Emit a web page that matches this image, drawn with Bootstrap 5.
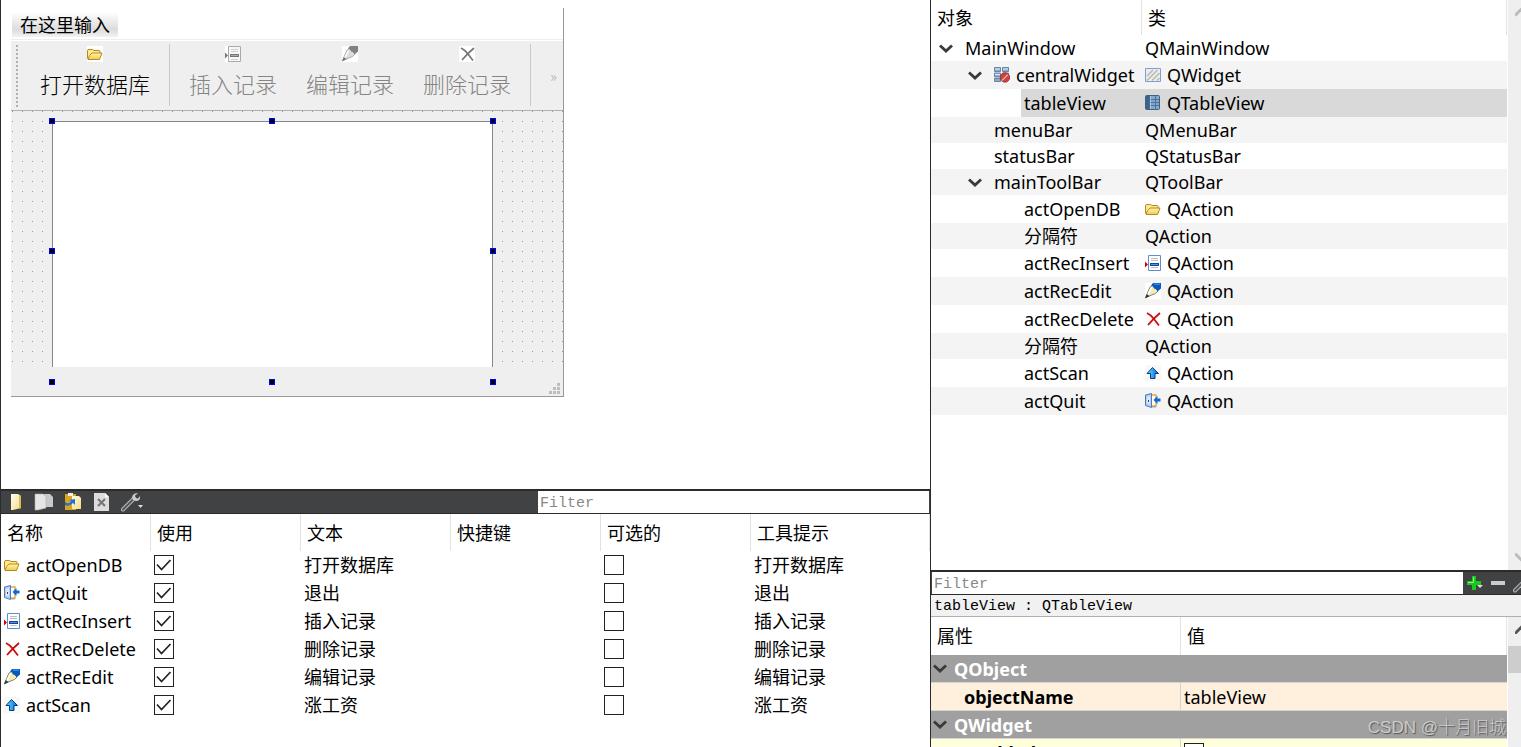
<!DOCTYPE html>
<html lang="zh-CN">
<head>
<meta charset="utf-8">
<meta name="viewport" content="width=device-width, initial-scale=1">
<title>Qt Designer</title>
<link href="https://cdn.jsdelivr.net/npm/bootstrap@5.3.0/dist/css/bootstrap.min.css" rel="stylesheet">
<style>
body{font-family:"Noto Sans","Noto Sans CJK SC",sans-serif;font-size:18px;line-height:24px;color:#000;background:#fff}
.designer{display:grid;grid-template-columns:930fr 591fr;height:100vh;overflow:hidden}
.left-pane{display:grid;grid-template-rows:489fr 258fr;border-left:1px solid #2b2b2d;min-width:0;min-height:0}
.right-pane{display:grid;grid-template-rows:570fr 177fr;border-left:1px solid #2b2b2d;min-width:0;min-height:0}
.left-pane>*,.right-pane>*{min-width:0;min-height:0;overflow:hidden}
svg{display:block;flex:none}
.ic{width:16px;height:16px}
.grid-tbl .ic{margin-right:6px}

/* form being edited */
.form-stage{padding:8px 0 0 10px}
.form-win{width:553px;border-right:1px solid #999;border-bottom:1px solid #999}
.menu-strip{height:32px;padding:4px 0 0 1px}
.menu-strip button{border:0;padding:0 8px;height:25px;line-height:24px;background:linear-gradient(#fff,#dcdcdc 70%,#f2f2f2)}
.tool-strip{height:71px;background:#efefef;border-top:1px solid #fff;border-bottom:1px solid #b0b0b0;padding:0 6px 0 5px;box-shadow:0 -1px #eee}
.grip{width:2px;height:63px;background:repeating-linear-gradient(#b0b0b0 0 2px,transparent 2px 4px)}
.tool-strip button{border:0;background:none;padding:5px 14px;font-family:"Noto Sans CJK SC",sans-serif;font-weight:300;font-size:22px;line-height:28px;color:#000}
.tool-strip button+button{margin-left:1px}
.tool-strip button svg{margin:0 auto 7px}
.tool-strip button:disabled{color:#858585}
.tool-strip .more{padding:0;font-size:15px;color:#aaa}
.vsep{width:1px;height:62px;background:#c8c8c8;margin:3px 5px 0}
.dots{height:256px;background:conic-gradient(from 270deg at 1px 1px,#999 90deg,transparent 0) 1px 0/10px 10px,#efefef;padding:10px 70px 0 41px}
.view-box{height:100%;background:#fff;border:1px solid #85858f;border-bottom:0}
.state-strip{height:29px;background:#efefef;padding:0 3px 2px}
.knob{position:absolute;width:6px;height:6px;background:#000;border:1px solid #00f;transform:translate(-50%,-50%)}

/* dark bars */
.dark-bar{height:25px;background:#404244;border-top:2px solid #2b2b2d;border-bottom:1px solid #2b2b2d}
.mono{font-family:"Liberation Mono",monospace;font-size:15px}
.find{border:0;border-radius:0;padding:2px 2px 0;height:22px;line-height:20px;background:#fff;min-width:0}
.find::placeholder{color:#888;opacity:1}
.dark-bar button{border:0;background:none;padding:0}
.act-tools{width:57.8%;gap:9px;padding-left:8px}
.act-find{margin-right:1px}
.prop-find{margin-left:1px}
.prop-tools{width:58px}

/* tables */
.grid-tbl{width:100%;table-layout:fixed;border-collapse:separate;border-spacing:0}
.grid-tbl th,.grid-tbl td{padding:0;white-space:nowrap;overflow:hidden;vertical-align:middle}
.grid-tbl thead th{font-weight:400;padding-left:6px;border-right:1px solid #e2e2e2}
.grid-tbl .c150{width:150px}
.grid-tbl .c211{width:211px}
.grid-tbl .c250{width:250px}
.acts thead th{height:37px}
.acts tbody td{height:28px;padding-left:3px}
.tick{width:20px;height:20px;margin:0;border:1px solid #222;border-radius:0!important;background-color:#fff;display:block}
.tick:checked{background-color:#fff;border-color:#222;background-size:20px 20px;background-image:url("data:image/svg+xml,%3Csvg xmlns='http://www.w3.org/2000/svg' viewBox='0 0 20 20'%3E%3Cpath d='M3 9.5l4.5 5L16.500 5' fill='none' stroke='%23222' stroke-width='1.700'/%3E%3C/svg%3E")!important}
.tree thead th{height:35px}
.tree tbody tr{height:26px}
.tree tbody tr.tall{height:28px}
.tree tbody tr:nth-child(even){background:#f4f4f4}
.tree td>div{height:26px}
.tree .tall td>div{height:28px}
.tree .lv1{padding-left:8px}
.tree .lv2{padding-left:37px}
.tree .lv2x{padding-left:63px}
.tree .lv3{padding-left:93px}
.tree .cls{padding-left:3px}
.picked{background:#d9d9d9;padding-left:3px}
.lead-gap{padding-left:90px}
.twist{width:14px;height:9px;margin-right:12px}
.rail{width:14px;border-left:1px solid #fff;background:#efefef;flex:none;overflow:hidden}
.thumb{height:27px;background:#cdcdcd}
.class-line{height:22px;line-height:24px;background:#f1f1f1;border-bottom:1px solid #b0b0b0;padding-left:3px}
.props thead th{height:38px}
.props tbody td,.props tbody th{height:28px;border-bottom:1px solid #d4d4d4}
.props .grp th{background:#a0a0a0;color:#fff;font-weight:700}
.props .grp .twist{margin:0 7px 0 2px}
.props .nm{font-weight:700;padding-left:33px;border-right:1px solid #d4d4d4}
.props .vl{padding-left:3px}
.c-peach>*{background:#fff0de}
.c-lemon>*{background:#ffffdc}
.stamp{position:absolute;right:15px;bottom:7px;color:#ccc;font-family:"Liberation Sans","Noto Sans CJK SC",sans-serif;font-weight:300;font-size:17px;text-shadow:1px 1px 1px #555}
</style>
</head>
<body>
<svg width="0" height="0" class="position-absolute" aria-hidden="true">
<defs>
<linearGradient id="gy" x2="0" y2="1"><stop stop-color="#fff6b0"/><stop offset="1" stop-color="#f3cb4c"/></linearGradient>
<linearGradient id="gb" x2="1" y2="0"><stop stop-color="#5fe0ff"/><stop offset="1" stop-color="#0a64e0"/></linearGradient>
<linearGradient id="gt" x2="1" y2="1"><stop stop-color="#8fb4d4"/><stop offset="1" stop-color="#30587f"/></linearGradient>
<linearGradient id="gp" x2="1" y2="1"><stop stop-color="#fffdf0"/><stop offset="1" stop-color="#f3dd82"/></linearGradient>
</defs>
<symbol id="folder" viewBox="0 0 16 16"><path d="M.5 12.500V4.500Q.5 3.500 2 3.500h3.500l1.500 1h5q1 0 1 1V7" fill="#ffe98e" stroke="#b88720"/><path d="M1 13.500h11.500l2.500-6.500H5L2.500 9.500z" fill="url(#gy)" stroke="#b88720" stroke-linejoin="round"/></symbol>
<symbol id="quit" viewBox="0 0 16 16"><path d="M6 2h5v11H6z" fill="#fff" stroke="#e0a84c" stroke-width="1.500"/><path d="M.5 2L6.500.500v14L.5 12.500z" fill="#b7cdf2" stroke="#4f78bd"/><path d="M2 4l3-1v8l-3-.5z" fill="#dbe7fb"/><path d="M3.500 7v2" stroke="#345"/><path d="M7 13h4v1.500H7z" fill="#aaa"/><path d="M15.500 5.500h-3V3L8.500 7l4 4V8.500h3z" fill="#096bd6"/></symbol>
<symbol id="insert" viewBox="0 0 16 16"><path d="M3.500.5h12v15h-12z" fill="#fff" stroke="#5b8fd0"/><path d="M6 3.500h7M6 5.500h7M6 12.500h7" stroke="#b9c0ca"/><path d="M5 8h9v3H5z" fill="#12489b"/><path d="M6 9.500h7" stroke="#5c8fd8"/><path d="M0 6.500l3 3-3 3z" fill="#d40000"/></symbol>
<symbol id="insertoff" viewBox="0 0 16 16"><path d="M0 0h16v16H0z" fill="#fff"/><path d="M3.500.5h12v15h-12z" fill="#f7f7f7" stroke="#aaa"/><path d="M6 3.500h7M6 5.500h7M6 13.500h7" stroke="#d0d0d0"/><path d="M5 8h9v3H5z" fill="#777"/><path d="M6 9.500h7" stroke="#aaa"/><path d="M0 6.500l3 3-3 3z" fill="#777"/></symbol>
<symbol id="del" viewBox="0 0 16 16"><path d="M2 2Q6 4 9 8t5 6.500M15 2Q9 7 3 14" fill="none" stroke="#cc0d0d" stroke-width="1.800"/></symbol>
<symbol id="deloff" viewBox="0 0 16 16"><path d="M0 0h16v16H0z" fill="#fff"/><path d="M2 2Q6 4 9 8t5 6.500M15 2Q9 7 3 14" fill="none" stroke="#777" stroke-width="1.700"/></symbol>
<symbol id="edit" viewBox="0 0 16 16"><path d="M0 0h16v16H0z" fill="#fff"/><path d="M.5 14.500L5 4l2.500-1.500L13 8l-2.500 2.500z" fill="#f3ecb0" stroke="#666" stroke-width=".8"/><path d="M6 2.500L8 0h8v5.500L12.500 8.500Q11.500 5.500 9 5.500 8.500 3 6 2.500z" fill="#0b55c0"/><path d="M9 1.200h6" stroke="#279bf0" stroke-width="1.300"/><path d="M0 15.500l1.800-4.500 2.700 2.200z" fill="#333"/><path d="M6.500 4.500L3 11.500" stroke="#fff" stroke-width="1.500"/></symbol>
<symbol id="editoff" viewBox="0 0 16 16"><path d="M0 0h16v16H0z" fill="#fff"/><path d="M.5 14.500L5 4l2.500-1.500L13 8l-2.500 2.500z" fill="#ddd" stroke="#999" stroke-width=".8"/><path d="M6 2.500L8 0h8v5.500L12.500 8.500Q11.500 5.500 9 5.500 8.500 3 6 2.500z" fill="#828282"/><path d="M0 15.500l1.800-4.500 2.700 2.200z" fill="#777"/><path d="M6.500 4.500L3 11.500" stroke="#fff" stroke-width="1.500"/></symbol>
<symbol id="scan" viewBox="0 0 16 16"><path d="M0 0h16v16H0z" fill="#f8f8f8"/><path d="M7.500 2.500L13.500 8.500h-3.500v5H5.500v-5H2z" fill="url(#gb)" stroke="#073b80"/></symbol>
<symbol id="layout" viewBox="0 0 16 16"><path d="M.5.5h6v4h-6zM8.500.5h6v4h-6zM.5 6h6v4h-6zM8.500 6h6v4h-6zM.5 11.500h6v3h-6z" fill="#86acd0" stroke="#53718f" stroke-width=".8"/><path d="M1 2h5M9 2h5M1 7.500h5" stroke="#e3effa"/><circle cx="11" cy="10.500" r="4.700" fill="#c94444" stroke="#a52222" stroke-width=".8"/><path d="M8 13.500l6-6" stroke="#eaa9a9" stroke-width="1.200"/></symbol>
<symbol id="widget" viewBox="0 0 16 16"><path d="M.5 1.500h15v13H.5z" fill="#ececea" stroke="#7ba0d8"/><path d="M2 9l6-6M2 13.500L12.500 3M7 13.500L14.500 6M12 13.500l2.500-2.500" stroke="#b9b9b5" stroke-width="1.600"/></symbol>
<symbol id="tbl" viewBox="0 0 16 16"><rect x=".5" y=".5" width="14" height="14" rx="1" fill="#7fa9cd" stroke="#42617f"/><path d="M1 1h3.500v13H1z" fill="#3d6286"/><path d="M4.500 1v13M10.500 1v13M1 4.500h13M1 7.500h13M1 10.500h13" stroke="#42678c" stroke-width=".8"/><path d="M5.500 1v13" stroke="#b9d8ef" stroke-width=".7"/></symbol>
<symbol id="twist" viewBox="0 0 14 9"><path d="M1 1.500l6 5.500 6-5.500" fill="none" stroke="#3a3a3a" stroke-width="2.800"/></symbol>
<symbol id="wrench" viewBox="0 0 20 20"><path d="M2 17.500L13 6.500" stroke="#bbb" stroke-width="4" stroke-linecap="round"/><path d="M2 17.500L13 6.500" stroke="#555" stroke-width="2" stroke-linecap="round"/><path d="M17 1.500l-3 2 .5 2.500 2.500.5 2-2.500q.5 4-2.500 4.800-3 .7-4.800-1.200-1.500-3 .8-5Q14.500.8 17 1.500z" fill="#ccc"/></symbol>
</svg>

<main class="designer position-relative">
<div class="left-pane">
  <section class="form-stage" aria-label="窗体">
    <div class="form-win position-relative">
      <div class="menu-strip"><button type="button">在这里输入</button></div>
      <div class="tool-strip d-flex align-items-start">
        <span class="grip mt-1"></span>
        <button type="button" class="ms-2"><svg class="ic bg-white"><use href="#folder"/></svg>打开数据库</button>
        <span class="vsep"></span>
        <button type="button" disabled><svg class="ic"><use href="#insertoff"/></svg>插入记录</button>
        <button type="button" disabled><svg class="ic"><use href="#editoff"/></svg>编辑记录</button>
        <button type="button" disabled><svg class="ic"><use href="#deloff"/></svg>删除记录</button>
        <span class="vsep"></span>
        <button type="button" class="more ms-auto align-self-center" aria-label="更多">»</button>
      </div>
      <div class="dots"><div class="view-box"></div></div>
      <div class="state-strip d-flex justify-content-end align-items-end"><svg width="11" height="11" fill="#bdbdbd"><path d="M0 8h3v3H0zM4 8h3v3H4zM8 8h3v3H8zM4 4h3v3H4zM8 4h3v3H8zM8 0h3v3H8z"/></svg></div>
      <i class="knob" style="left:41px;top:113px"></i><i class="knob" style="left:261px;top:113px"></i><i class="knob" style="left:482px;top:113px"></i>
      <i class="knob" style="left:41px;top:243px"></i><i class="knob" style="left:482px;top:243px"></i>
      <i class="knob" style="left:41px;top:374px"></i><i class="knob" style="left:261px;top:374px"></i><i class="knob" style="left:482px;top:374px"></i>
    </div>
  </section>

  <section aria-label="动作编辑器">
    <div class="dark-bar d-flex align-items-center">
      <div class="act-tools d-flex align-items-center flex-shrink-0">
        <button type="button" aria-label="新建"><svg width="16" height="18"><path d="M2 1h7l3 2v12L4 17H2z" fill="url(#gp)"/><path d="M10 2v14l2-1V3z" fill="#d9bd58"/></svg></button>
        <button type="button" aria-label="复制"><svg width="20" height="18"><path d="M8 1h8l3 3v10H8z" fill="#c9c9c9"/><path d="M1 1h8l3 3v11L4 17H1z" fill="#e6e6e6" stroke="#b0b0b0" stroke-width=".6"/></svg></button>
        <button type="button" aria-label="粘贴"><svg width="20" height="18"><path d="M2 1h11v16H2z" fill="#d9a520"/><path d="M5 0h5v3H5z" fill="#eee"/><path d="M9 3h7l2 2v11H9z" fill="url(#gp)"/><path d="M2 9q4 3 6-1L6 7l6-1v6l-2-2q-4 4-8 2z" fill="#2470cf"/></svg></button>
        <button type="button" aria-label="删除"><svg width="20" height="18"><path d="M2 0h11l4 4v14H2z" fill="#ddd"/><path d="M13 0v4h4z" fill="#fff"/><path d="M6 6l7 7M13 6l-7 7" stroke="#777" stroke-width="2.200"/></svg></button>
        <button type="button" aria-label="配置" class="d-flex align-items-center"><svg width="22" height="20"><use href="#wrench" width="20" height="20"/><path d="M17 13h5L19.500 16z" fill="#ddd"/></svg></button>
      </div>
      <input class="find act-find mono flex-grow-1" type="text" placeholder="Filter" aria-label="Filter">
    </div>
    <table class="grid-tbl acts">
      <colgroup><col class="c150"><col class="c150"><col class="c150"><col class="c150"><col class="c150"><col></colgroup>
      <thead><tr><th>名称</th><th>使用</th><th>文本</th><th>快捷键</th><th>可选的</th><th>工具提示</th></tr></thead>
      <tbody>
      <tr><td><div class="d-flex align-items-center"><svg class="ic"><use href="#folder"/></svg>actOpenDB</div></td><td><input class="form-check-input tick" type="checkbox" checked aria-label="使用 actOpenDB"></td><td>打开数据库</td><td></td><td><input class="form-check-input tick" type="checkbox" aria-label="可选 actOpenDB"></td><td>打开数据库</td></tr>
      <tr><td><div class="d-flex align-items-center"><svg class="ic"><use href="#quit"/></svg>actQuit</div></td><td><input class="form-check-input tick" type="checkbox" checked aria-label="使用 actQuit"></td><td>退出</td><td></td><td><input class="form-check-input tick" type="checkbox" aria-label="可选 actQuit"></td><td>退出</td></tr>
      <tr><td><div class="d-flex align-items-center"><svg class="ic"><use href="#insert"/></svg>actRecInsert</div></td><td><input class="form-check-input tick" type="checkbox" checked aria-label="使用 actRecInsert"></td><td>插入记录</td><td></td><td><input class="form-check-input tick" type="checkbox" aria-label="可选 actRecInsert"></td><td>插入记录</td></tr>
      <tr><td><div class="d-flex align-items-center"><svg class="ic"><use href="#del"/></svg>actRecDelete</div></td><td><input class="form-check-input tick" type="checkbox" checked aria-label="使用 actRecDelete"></td><td>删除记录</td><td></td><td><input class="form-check-input tick" type="checkbox" aria-label="可选 actRecDelete"></td><td>删除记录</td></tr>
      <tr><td><div class="d-flex align-items-center"><svg class="ic"><use href="#edit"/></svg>actRecEdit</div></td><td><input class="form-check-input tick" type="checkbox" checked aria-label="使用 actRecEdit"></td><td>编辑记录</td><td></td><td><input class="form-check-input tick" type="checkbox" aria-label="可选 actRecEdit"></td><td>编辑记录</td></tr>
      <tr><td><div class="d-flex align-items-center"><svg class="ic"><use href="#scan"/></svg>actScan</div></td><td><input class="form-check-input tick" type="checkbox" checked aria-label="使用 actScan"></td><td>涨工资</td><td></td><td><input class="form-check-input tick" type="checkbox" aria-label="可选 actScan"></td><td>涨工资</td></tr>
      </tbody>
    </table>
  </section>
</div>

<div class="right-pane">
  <section class="d-flex" aria-label="对象查看器">
    <div class="flex-grow-1">
    <table class="grid-tbl tree">
      <colgroup><col class="c211"><col></colgroup>
      <thead><tr><th>对象</th><th>类</th></tr></thead>
      <tbody>
      <tr><td><div class="d-flex align-items-center lv1"><svg class="twist"><use href="#twist"/></svg>MainWindow</div></td><td><div class="d-flex align-items-center cls">QMainWindow</div></td></tr>
      <tr class="tall"><td><div class="d-flex align-items-center lv2"><svg class="twist"><use href="#twist"/></svg><svg class="ic"><use href="#layout"/></svg>centralWidget</div></td><td><div class="d-flex align-items-center cls"><svg class="ic"><use href="#widget"/></svg>QWidget</div></td></tr>
      <tr class="tall"><td><div class="lead-gap d-flex"><span class="picked flex-grow-1 d-flex align-items-center">tableView</span></div></td><td><div class="d-flex align-items-center cls picked"><svg class="ic"><use href="#tbl"/></svg>QTableView</div></td></tr>
      <tr><td><div class="d-flex align-items-center lv2x">menuBar</div></td><td><div class="d-flex align-items-center cls">QMenuBar</div></td></tr>
      <tr><td><div class="d-flex align-items-center lv2x">statusBar</div></td><td><div class="d-flex align-items-center cls">QStatusBar</div></td></tr>
      <tr><td><div class="d-flex align-items-center lv2"><svg class="twist"><use href="#twist"/></svg>mainToolBar</div></td><td><div class="d-flex align-items-center cls">QToolBar</div></td></tr>
      <tr class="tall"><td><div class="d-flex align-items-center lv3">actOpenDB</div></td><td><div class="d-flex align-items-center cls"><svg class="ic"><use href="#folder"/></svg>QAction</div></td></tr>
      <tr><td><div class="d-flex align-items-center lv3">分隔符</div></td><td><div class="d-flex align-items-center cls">QAction</div></td></tr>
      <tr class="tall"><td><div class="d-flex align-items-center lv3">actRecInsert</div></td><td><div class="d-flex align-items-center cls"><svg class="ic"><use href="#insert"/></svg>QAction</div></td></tr>
      <tr class="tall"><td><div class="d-flex align-items-center lv3">actRecEdit</div></td><td><div class="d-flex align-items-center cls"><svg class="ic"><use href="#edit"/></svg>QAction</div></td></tr>
      <tr class="tall"><td><div class="d-flex align-items-center lv3">actRecDelete</div></td><td><div class="d-flex align-items-center cls"><svg class="ic"><use href="#del"/></svg>QAction</div></td></tr>
      <tr><td><div class="d-flex align-items-center lv3">分隔符</div></td><td><div class="d-flex align-items-center cls">QAction</div></td></tr>
      <tr class="tall"><td><div class="d-flex align-items-center lv3">actScan</div></td><td><div class="d-flex align-items-center cls"><svg class="ic"><use href="#scan"/></svg>QAction</div></td></tr>
      <tr class="tall"><td><div class="d-flex align-items-center lv3">actQuit</div></td><td><div class="d-flex align-items-center cls"><svg class="ic"><use href="#quit"/></svg>QAction</div></td></tr>
      </tbody>
    </table>
    </div>
    <div class="rail d-flex flex-column justify-content-between align-items-end py-2">
      <svg width="6" height="9"><path d="M0 7.500l7-7" stroke="#bbb" stroke-width="3"/></svg>
      <svg width="6" height="9"><path d="M0 .5l7 7" stroke="#bbb" stroke-width="3"/></svg>
    </div>
  </section>

  <section class="d-flex flex-column" aria-label="属性编辑器">
    <div class="dark-bar d-flex align-items-center flex-shrink-0">
      <input class="find prop-find mono flex-grow-1" type="text" placeholder="Filter" aria-label="Filter">
      <div class="prop-tools d-flex align-items-center flex-shrink-0 overflow-hidden">
        <button type="button" aria-label="添加" class="ms-1"><svg width="16" height="16"><path d="M5 1h4v5h5v4H9v5H5v-5H0V6h5z" fill="#19c81e"/><path d="M6.500 2v5.500H1" stroke="#8df77e" fill="none"/><path d="M10 10h6l-3 3z" fill="#ddd"/></svg></button>
        <button type="button" aria-label="移除" class="ms-2"><svg width="14" height="16"><path d="M0 6h14v4H0z" fill="#ccc"/></svg></button>
        <button type="button" aria-label="配置" class="ms-2"><svg width="20" height="20"><use href="#wrench"/></svg></button>
      </div>
    </div>
    <div class="class-line mono flex-shrink-0">tableView : QTableView</div>
    <div class="d-flex overflow-hidden flex-grow-1">
      <div class="flex-grow-1 overflow-hidden">
      <table class="grid-tbl props">
        <colgroup><col class="c250"><col></colgroup>
        <thead><tr><th>属性</th><th>值</th></tr></thead>
        <tbody>
        <tr class="grp"><th colspan="2"><div class="d-flex align-items-center"><svg class="twist"><use href="#twist"/></svg>QObject</div></th></tr>
        <tr class="c-peach"><td class="nm">objectName</td><td class="vl">tableView</td></tr>
        <tr class="grp"><th colspan="2"><div class="d-flex align-items-center"><svg class="twist"><use href="#twist"/></svg>QWidget</div></th></tr>
        <tr class="c-lemon"><td class="nm"><label for="en">enabled</label></td><td class="vl"><input id="en" class="form-check-input tick" type="checkbox" checked></td></tr>
        </tbody>
      </table>
      </div>
      <div class="rail d-flex flex-column align-items-stretch">
        <svg width="6" height="9" class="align-self-end mt-2 mb-2"><path d="M0 8.500l7-7" stroke="#555" stroke-width="3"/></svg>
        <div class="thumb mt-1"></div>
      </div>
    </div>
  </section>
</div>
<div class="stamp">CSDN @十月旧城</div>
</main>
<script src="https://cdn.jsdelivr.net/npm/bootstrap@5.3.0/dist/js/bootstrap.bundle.min.js"></script>
</body>
</html>
